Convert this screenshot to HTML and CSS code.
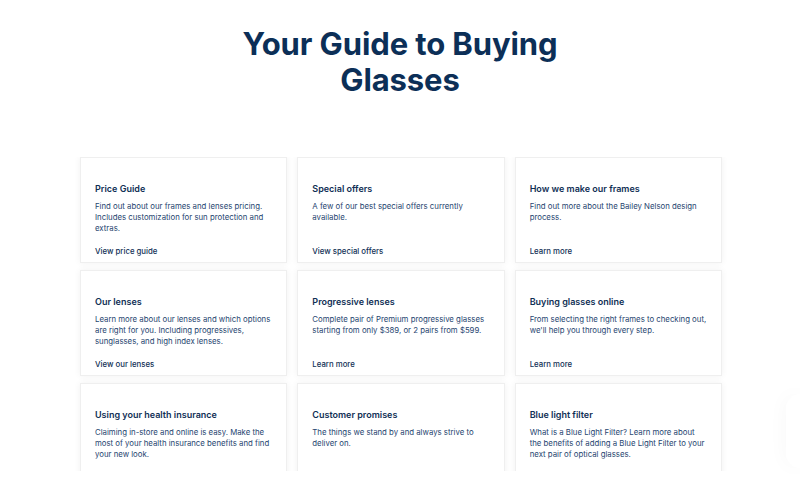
FILE: index.html
```html
<!DOCTYPE html>
<html lang="en">
<head>
<meta charset="utf-8">
<title>Your Guide to Buying Glasses</title>
<link rel="stylesheet" href="styles.css">
</head>
<body>
<main class="page">
  <h1 class="title">Your Guide to Buying<br>Glasses</h1>
  <div class="clip">
    <div class="grid">
      <article class="card">
        <h2 class="card-title">Price Guide</h2>
        <p class="card-text">Find out about our frames and lenses pricing. Includes customization for sun protection and extras.</p>
        <a class="card-link" href="#">View price guide</a>
      </article>
      <article class="card">
        <h2 class="card-title">Special offers</h2>
        <p class="card-text">A few of our best special offers currently available.</p>
        <a class="card-link" href="#">View special offers</a>
      </article>
      <article class="card">
        <h2 class="card-title">How we make our frames</h2>
        <p class="card-text">Find out more about the Bailey Nelson design process.</p>
        <a class="card-link" href="#">Learn more</a>
      </article>
      <article class="card">
        <h2 class="card-title">Our lenses</h2>
        <p class="card-text">Learn more about our lenses and which options are right for you. Including progressives, sunglasses, and high index lenses.</p>
        <a class="card-link" href="#">View our lenses</a>
      </article>
      <article class="card">
        <h2 class="card-title">Progressive lenses</h2>
        <p class="card-text">Complete pair of Premium progressive glasses starting from only $389, or 2 pairs from $599.</p>
        <a class="card-link" href="#">Learn more</a>
      </article>
      <article class="card">
        <h2 class="card-title">Buying glasses online</h2>
        <p class="card-text">From selecting the right frames to checking out, we'll help you through every step.</p>
        <a class="card-link" href="#">Learn more</a>
      </article>
      <article class="card">
        <h2 class="card-title">Using your health insurance</h2>
        <p class="card-text">Claiming in-store and online is easy. Make the most of your health insurance benefits and find your new look.</p>
      </article>
      <article class="card">
        <h2 class="card-title">Customer promises</h2>
        <p class="card-text">The things we stand by and always strive to deliver on.</p>
      </article>
      <article class="card">
        <h2 class="card-title">Blue light filter</h2>
        <p class="card-text">What is a Blue Light Filter? Learn more about the benefits of adding a Blue Light Filter to your next pair of optical glasses.</p>
      </article>
    </div>
  </div>
  <div class="widget" aria-hidden="true"></div>
</main>
</body>
</html>
```
FILE: styles.css
```css
* { box-sizing: border-box; }
html, body {
  margin: 0;
  padding: 0;
  background: #ffffff;
}
body {
  font-family: "Inter", "Lato", "Liberation Sans", sans-serif;
  color: #15365c;
  overflow: hidden;
}
.page {
  position: relative;
  width: 800px;
  height: 500px;
  overflow: hidden;
}
.title {
  margin: 0;
  padding-top: 26px;
  text-align: center;
  font-size: 31px;
  line-height: 36px;
  font-weight: 700;
  color: #0c2f57;
  letter-spacing: -0.1px;
}
.clip {
  margin-top: 59px;
  height: 314px;
  overflow: hidden;
}
.grid {
  width: 642px;
  margin-left: 80px;
  display: grid;
  grid-template-columns: repeat(3, 1fr);
  grid-auto-rows: 106px;
  column-gap: 10px;
  row-gap: 7px;
}
.card {
  background: #ffffff;
  border: 1px solid #efefef;
  box-shadow: 0 0 7px rgba(0, 0, 0, 0.06);
  padding: 25px 14px 5px 14px;
  display: flex;
  flex-direction: column;
}
.card-title {
  margin: 0 0 6px 0;
  font-size: 9px;
  line-height: 12px;
  font-weight: 600;
  color: #102f55;
}
.card-text {
  margin: 0;
  font-size: 7.8px;
  line-height: 11px;
  font-weight: 400;
  color: #1f4570;
}
.card-link {
  margin-top: auto;
  font-size: 7.8px;
  line-height: 11px;
  font-weight: 500;
  color: #102f55;
  text-decoration: none;
}
.widget {
  position: absolute;
  left: 786px;
  top: 394px;
  width: 14px;
  height: 74px;
  border-radius: 14px 0 0 14px;
  background: #ffffff;
  box-shadow: 0 0 20px rgba(0, 0, 0, 0.04);
}
```
